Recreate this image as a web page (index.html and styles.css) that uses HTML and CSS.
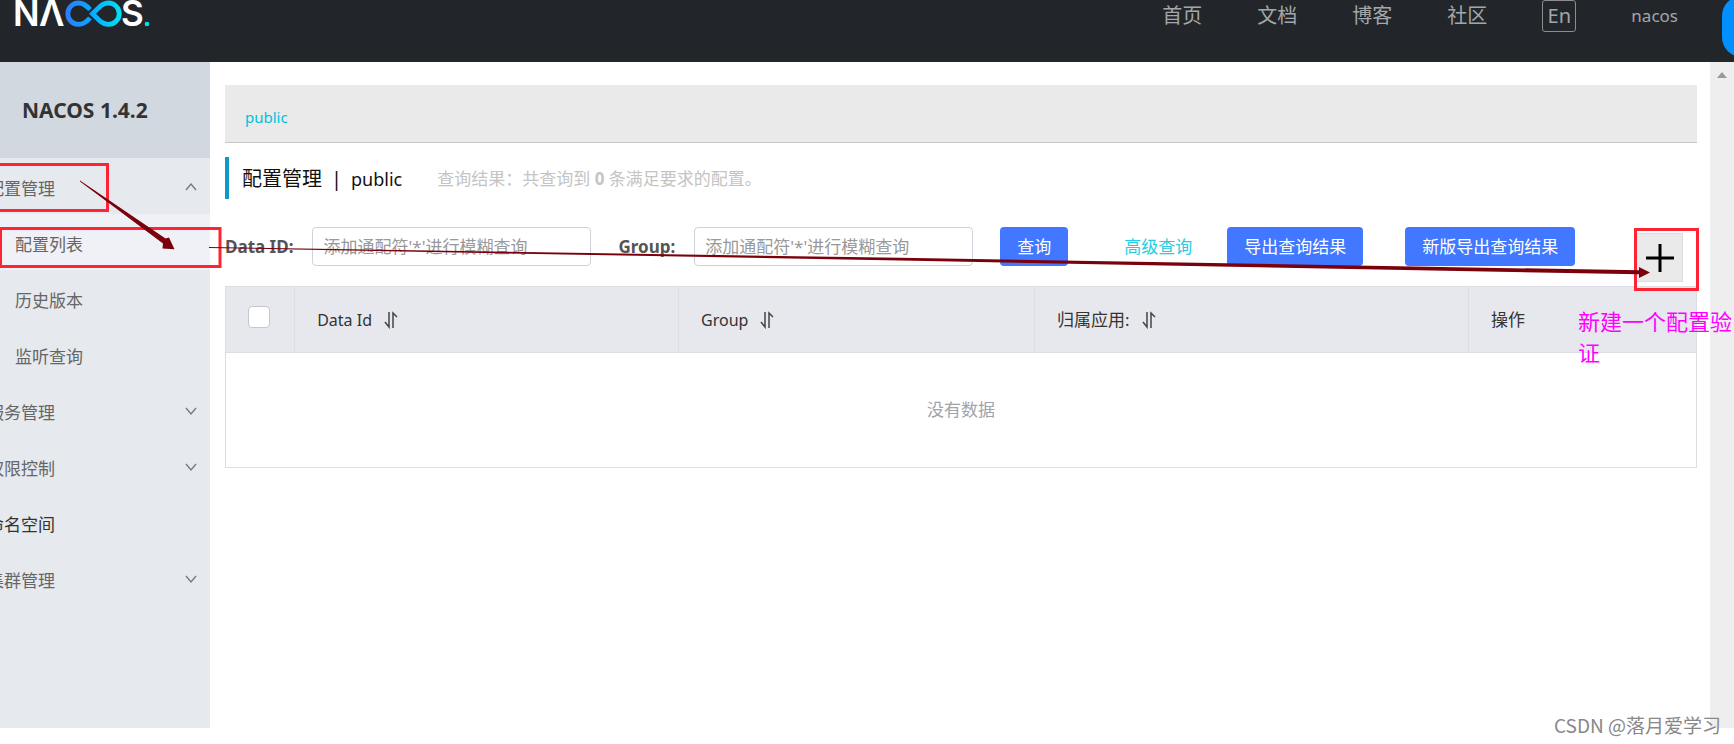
FILE: index.html
```html
<!DOCTYPE html>
<html lang="zh-CN">
<head>
<meta charset="utf-8">
<title>NACOS</title>
<link rel="stylesheet" href="styles.css">
</head>
<body>
<header class="topbar">
  <a class="logo" href="#" aria-label="NACOS">
    <svg width="140" height="32" viewBox="-4 0 140 32">
      <defs>
        <linearGradient id="loop" gradientUnits="userSpaceOnUse" x1="50" y1="0" x2="106" y2="0">
          <stop offset="0" stop-color="#2f7bff"/>
          <stop offset="0.45" stop-color="#08a6ff"/>
          <stop offset="1" stop-color="#00e2f0"/>
        </linearGradient>
      </defs>
      <text class="logo-text" x="-2" y="26">N</text>
      <text class="logo-text" x="24" y="26">Λ</text>
      <g fill="none" stroke="url(#loop)" stroke-width="4.8">
        <path d="M75 9.5C71.500 5.500 68.500 3 63.500 3A10.700 10.700 0 0 0 63.500 24.400C68.500 24.400 71.500 22 75 18"/>
        <path d="M77.500 13.700L85.500 6C88 4 90.500 3 93.500 3A10.700 10.700 0 0 1 93.500 24.400C90.500 24.400 88 23.400 85.500 21.400Z"/>
      </g>
      <text class="logo-text" x="106" y="26">S</text>
      <circle cx="132" cy="24" r="2.300" fill="#00dff0"/>
    </svg>
  </a>
  <nav class="topnav">
    <a href="#">首页</a>
    <a href="#">文档</a>
    <a href="#">博客</a>
    <a href="#">社区</a>
    <button class="lang" type="button">En</button>
    <a class="user" href="#">nacos</a>
  </nav>
</header>

<div class="shell">
  <aside class="sidebar">
    <h2 class="version">NACOS 1.4.2</h2>
    <nav class="menu">
      <button class="item" type="button">配置管理<svg class="chevron" viewBox="0 0 12 8"><path d="M1 7L6 1L11 7"/></svg></button>
      <a class="sub active" href="#">配置列表</a>
      <a class="sub" href="#">历史版本</a>
      <a class="sub" href="#">监听查询</a>
      <button class="item" type="button">服务管理<svg class="chevron" viewBox="0 0 12 8"><path d="M1 1L6 7L11 1"/></svg></button>
      <button class="item" type="button">权限控制<svg class="chevron" viewBox="0 0 12 8"><path d="M1 1L6 7L11 1"/></svg></button>
      <a class="item leaf" href="#">命名空间</a>
      <button class="item" type="button">集群管理<svg class="chevron" viewBox="0 0 12 8"><path d="M1 1L6 7L11 1"/></svg></button>
    </nav>
  </aside>

  <main class="content">
    <div class="namespaces"><a href="#">public</a></div>
    <div class="heading">
      <h1><span>配置管理</span><span>|</span><span class="ns">public</span></h1>
      <p class="result">查询结果：共查询到 <strong>0</strong> 条满足要求的配置。</p>
    </div>
    <div class="toolbar">
      <form class="search">
        <div class="field"><label for="dataId">Data ID:</label><input id="dataId" type="text" placeholder="添加通配符'*'进行模糊查询"></div>
        <div class="field"><label for="group">Group:</label><input id="group" type="text" placeholder="添加通配符'*'进行模糊查询"></div>
        <button class="btn" type="button">查询</button>
        <a class="advanced" href="#">高级查询</a>
        <button class="btn" type="button">导出查询结果</button>
        <button class="btn btn-new" type="button">新版导出查询结果</button>
      </form>
      <button class="add" type="button" aria-label="新建配置"><svg width="28" height="28" viewBox="0 0 28 28"><path d="M14 0V28M0 14H28"/></svg></button>
    </div>
    <table class="configs">
      <colgroup><col class="c-check"><col class="c-id"><col class="c-group"><col class="c-app"><col class="c-op"></colgroup>
      <thead>
        <tr>
          <th class="check"><input type="checkbox" aria-label="全选"></th>
          <th>Data Id<button class="sort" type="button" aria-label="排序"><svg viewBox="0 0 16 18"><path d="M6 1V16L2 11"/><path d="M10 17V2L14 6"/></svg></button></th>
          <th>Group<button class="sort" type="button" aria-label="排序"><svg viewBox="0 0 16 18"><path d="M6 1V16L2 11"/><path d="M10 17V2L14 6"/></svg></button></th>
          <th class="cjk">归属应用:<button class="sort" type="button" aria-label="排序"><svg viewBox="0 0 16 18"><path d="M6 1V16L2 11"/><path d="M10 17V2L14 6"/></svg></button></th>
          <th class="cjk">操作</th>
        </tr>
      </thead>
      <tbody><tr><td colspan="5">没有数据</td></tr></tbody>
    </table>
  </main>
  <div class="scrollbar"><svg width="10" height="6" viewBox="0 0 10 6"><path d="M0 6L5 0L10 6Z" fill="#999"/></svg></div>
</div>

<div class="bubble"></div>
<svg class="marks" width="1734" height="744" viewBox="0 0 1734 744">
  <g fill="none" stroke="#ff2434" stroke-width="3">
    <rect x="-10" y="164.500" width="117.500" height="46"/>
    <rect x="0.500" y="228.500" width="219.500" height="38"/>
    <rect x="1635.500" y="229.500" width="62" height="60"/>
  </g>
  <g fill="#7a000c">
    <path d="M80 180.500L165.500 238.500L169 237.500L174.500 249.300L162.500 248.500L163 243.500L80 181.500Z"/>
    <path d="M209 247L900 257.800L1639 270.300V267L1650 272.500L1639 278V274.300L900 260.600L209 248Z"/>
  </g>
</svg>
<p class="note">新建一个配置验证</p>
<p class="watermark">CSDN @落月爱学习</p>
</body>
</html>
```
FILE: styles.css
```css
* {
  box-sizing: border-box;
}

body {
  position: relative;
  display: flex;
  flex-direction: column;
  min-height: 100vh;
  margin: 0;
  padding-bottom: 16px;
  overflow: hidden;
  background: #fff;
  color: #333;
  font: 17px/24px "Noto Sans", "Noto Sans CJK SC", sans-serif;
}

h1, h2, p {
  margin: 0;
}

a {
  color: inherit;
  text-decoration: none;
}

button {
  margin: 0;
  padding: 0;
  border: 0;
  background: none;
  color: inherit;
  font: inherit;
}

.topbar {
  display: flex;
  justify-content: space-between;
  align-items: flex-start;
  height: 62px;
  padding: 0 56px 0 11px;
  background: #22262b;
  color: #a4a6a8;
}

.logo svg {
  display: block;
  overflow: visible;
}

.logo-text {
  fill: #fff;
  font: 600 35px Inter, sans-serif;
}

.topnav {
  display: flex;
  align-items: center;
  gap: 55px;
  height: 32px;
  font-size: 20px;
}

.lang {
  width: 34px;
  height: 32px;
  border: 1px solid #8b8d90;
  border-radius: 3px;
  line-height: 28px;
}

.user {
  font-size: 17px;
}

.shell {
  display: flex;
  flex: 1;
}

.sidebar {
  flex: none;
  width: 210px;
  overflow: hidden;
  background: #e6e9ed;
}

.version {
  padding: 36px 22px;
  background: #d2d8e0;
  font-size: 21px;
  line-height: 24px;
}

.menu {
  color: #666;
}

.item {
  display: flex;
  justify-content: space-between;
  align-items: center;
  width: 223px;
  height: 56px;
  margin-left: -13px;
  padding: 6px 13px 0 0;
}

.leaf {
  color: #333;
}

.sub {
  display: flex;
  align-items: center;
  height: 56px;
  padding: 6px 15px 0;
}

.active {
  background: #f0f1f6;
}

.chevron {
  width: 12px;
  height: 8px;
  margin-bottom: 5px;
  fill: none;
  stroke: #777;
  stroke-width: 1.3;
}

.content {
  flex: 1;
  min-width: 0;
  padding: 23px 13px 0 15px;
}

.namespaces {
  height: 58px;
  padding: 20px 20px 0;
  border-bottom: 1px solid #c8c8c8;
  background: #eaeaea;
  color: #00c1de;
  font-size: 15px;
}

.heading {
  display: flex;
  align-items: center;
  gap: 35px;
  height: 42px;
  margin-top: 14px;
  padding: 2px 0 0 13px;
  border-left: 4px solid #0f99c8;
}

h1 {
  display: flex;
  gap: 9px;
  color: #111;
  font-size: 20px;
  font-weight: 400;
}

.ns {
  font-size: 18px;
}

.result {
  color: #c4c4c4;
}

.toolbar {
  display: flex;
  justify-content: space-between;
  align-items: flex-start;
  margin: 28px 14px 4px 0;
}

.search {
  display: flex;
  align-items: center;
  gap: 27px;
}

.field {
  display: flex;
  align-items: center;
  gap: 19px;
}

.field label {
  color: #555;
  font-weight: 700;
}

.field input {
  width: 279px;
  height: 39px;
  padding: 0 10px;
  border: 1px solid #cfd2da;
  border-radius: 4px;
  background: #fff;
  font: inherit;
}

.field input::placeholder {
  color: #999;
}

.btn {
  height: 39px;
  padding: 0 17px;
  border-radius: 4px;
  background: #4277ff;
  color: #fff;
  white-space: nowrap;
}

.btn-new {
  margin-left: 15px;
}

.advanced {
  padding: 0 8px 0 29px;
  color: #28cbe2;
  white-space: nowrap;
}

.add {
  display: grid;
  place-items: center;
  width: 47px;
  height: 49px;
  margin-top: 6px;
  border: 1px solid #ddd;
  background: #eaeaea;
}

.add svg {
  fill: none;
  stroke: #000;
  stroke-width: 3;
}

.configs {
  width: 100%;
  border: 1px solid #dcdee3;
  border-collapse: collapse;
  table-layout: fixed;
}

.c-check { width: 69px; }
.c-id { width: 26.1%; }
.c-group { width: 24.2%; }
.c-app { width: 29.5%; }
.c-op { width: 15.5%; }

.configs th {
  height: 66px;
  padding: 0 22px;
  border: 1px solid #dcdee3;
  background: #e6e8ed;
  font-size: 16px;
  font-weight: 400;
  text-align: left;
}

.configs th.cjk {
  font-size: 17px;
}

.configs td {
  height: 115px;
  color: #a0a2ac;
  text-align: center;
}

.check input {
  display: block;
  width: 22px;
  height: 22px;
  margin: 0 0 5px;
  appearance: none;
  border: 1px solid #c4c6cf;
  border-radius: 4px;
  background: #fff;
}

.sort {
  margin: 0 0 2px 11px;
  vertical-align: middle;
}

.sort svg {
  display: block;
  width: 16px;
  height: 18px;
  fill: none;
  stroke: #444;
  stroke-width: 1.5;
}

.scrollbar {
  flex: none;
  width: 24px;
  padding: 10px 7px;
  background: #eee;
}

.scrollbar svg {
  display: block;
}

.bubble {
  position: absolute;
  top: -4px;
  right: -48px;
  width: 60px;
  height: 61px;
  border-radius: 20px;
  background: #0090ff;
}

.marks {
  position: absolute;
  top: 0;
  left: 0;
  pointer-events: none;
}

.note {
  position: absolute;
  top: 306px;
  left: 1578px;
  width: 156px;
  color: #f0f;
  font-size: 22px;
  line-height: 31px;
}

.watermark {
  position: absolute;
  right: 13px;
  bottom: 6px;
  color: #888;
  font: 19px/26px "Noto Sans CJK SC", sans-serif;
}
```
